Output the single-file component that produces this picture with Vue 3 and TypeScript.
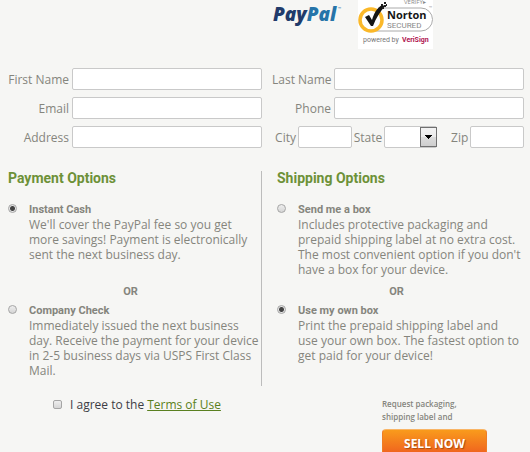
<script setup lang="ts">
import { ref } from 'vue'

interface Option {
  id: string
  title: string
  text: string
}

const first = ref('')
const last = ref('')
const email = ref('')
const phone = ref('')
const address = ref('')
const city = ref('')
const state = ref('')
const zip = ref('')
const agreed = ref(false)
const payment = ref('cash')
const shipping = ref('own')

const states: string[] = ['', 'CA', 'FL', 'NY', 'TX']

const payments: Option[] = [
  { id: 'cash', title: 'Instant Cash', text: "We'll cover the PayPal fee so you get more savings! Payment is electronically sent the next business day." },
  { id: 'check', title: 'Company Check', text: 'Immediately issued the next business day. Receive the payment for your device in 2-5 business days via USPS First Class Mail.' },
]
const shippings: Option[] = [
  { id: 'send', title: 'Send me a box', text: "Includes protective packaging and prepaid shipping label at no extra cost. The most convenient option if you don't have a box for your device." },
  { id: 'own', title: 'Use my own box', text: 'Print the prepaid shipping label and\nuse your own box. The fastest option to get paid for your device!' },
]
</script>

<template>
  <form class="page" @submit.prevent>
    <header class="logos">
      <svg class="paypal" width="70" height="30" viewBox="0 0 70 30" role="img" aria-label="PayPal">
        <text x="0" y="21" class="pp"><tspan class="dark">Pay</tspan><tspan class="light">Pal</tspan></text>
        <text x="65" y="10" class="tm">™</text>
      </svg>
      <svg class="norton" width="75" height="49" viewBox="0 0 75 49" role="img" aria-label="Norton Secured, powered by VeriSign">
        <rect width="75" height="49" fill="#fff" />
        <text x="46" y="4" class="verify">VERIFY▸</text>
        <path d="M20 8H63a11.500 11.500 0 0 1 0 23H14" fill="none" stroke="#aaa" stroke-width="1" />
        <circle cx="13" cy="20" r="11" fill="#fff" stroke="#fbb829" stroke-width="3.500" />
        <path d="M7 17l4-2 3 5C16 13 19 8 24 5l3 1C22 12 18 18 15 26h-2z" fill="#161616" />
        <path d="M23 4h2v2h-2zM26 2h2v2h-2zM28 4h1v2h-1zM26 5h2v2h-2zM24 7h2v2h-2z" fill="#222" />
        <text x="29" y="19" class="nname">Norton</text>
        <text x="29" y="28" class="nsec">SECURED</text>
        <text x="5" y="42" class="npow">powered by</text>
        <text x="44" y="42" class="nver">VeriSign</text>
        <text x="71" y="9" class="tm2">™</text>
      </svg>
    </header>

    <section class="fields">
      <div class="left">
        <label for="first">First Name</label><input id="first" v-model="first" type="text">
        <label for="email">Email</label><input id="email" v-model="email" type="text">
        <label for="address">Address</label><input id="address" v-model="address" type="text">
      </div>
      <div class="right">
        <label for="last">Last Name</label><input id="last" v-model="last" type="text">
        <label for="phone">Phone</label><input id="phone" v-model="phone" type="text">
        <div class="place">
          <label for="city">City</label><input id="city" v-model="city" type="text">
          <label for="state">State</label>
          <span class="drop">
            <select id="state" v-model="state">
              <option v-for="s in states" :key="s" :value="s">{{ s }}</option>
            </select>
            <svg class="arrow" width="17" height="20" viewBox="0 0 17 20" aria-hidden="true">
              <defs>
                <linearGradient id="face" x1="0" y1="0" x2="0" y2="1">
                  <stop offset="0" stop-color="#f3f3f3" />
                  <stop offset="0.500" stop-color="#ebebeb" />
                  <stop offset="0.500" stop-color="#dcdcdc" />
                  <stop offset="1" stop-color="#cdcdcd" />
                </linearGradient>
              </defs>
              <rect x="0.500" y="0.500" width="16" height="19" fill="url(#face)" stroke="#707070" />
              <path d="M5 8h7v1h-1v1h-1v1h-1v1H8v-1H7v-1H6V9H5z" fill="#000" />
            </svg>
          </span>
          <label for="zip">Zip</label><input id="zip" v-model="zip" type="text">
        </div>
      </div>
    </section>

    <section class="options">
      <h2 class="pay">Payment Options</h2>
      <h2 class="ship">Shipping Options</h2>
      <template v-for="(p, i) in payments" :key="p.id">
        <p v-if="i > 0" class="or pay">OR</p>
        <p v-if="i > 0" class="or ship">OR</p>
        <label class="option pay">
          <input v-model="payment" type="radio" name="payment" :value="p.id">
          <span><strong>{{ p.title }}</strong>{{ p.text }}</span>
        </label>
        <label class="option ship">
          <input v-model="shipping" type="radio" name="shipping" :value="shippings[i].id">
          <span><strong>{{ shippings[i].title }}</strong>{{ shippings[i].text }}</span>
        </label>
      </template>
    </section>

    <footer class="finish">
      <div class="terms">
        <input id="agree" v-model="agreed" type="checkbox">
        <label for="agree">I agree to the</label>
        <a href="#terms">Terms of Use</a>
      </div>
      <div class="sell">
        <p>Request packaging, shipping label and</p>
        <button type="submit">SELL NOW</button>
      </div>
    </footer>
  </form>
</template>

<style>
body {
  background: #f6f6f4;
}
</style>

<style scoped>
.page {
  box-sizing: border-box;
  height: 100vh;
  overflow: hidden;
  padding: 0 6px 0 8px;
  background: #f6f6f4;
  color: #85857d;
  font: 12px/15px "Open Sans", "Noto Sans", sans-serif;
}
.logos {
  display: flex;
  justify-content: center;
  gap: 15px;
  padding-left: 186px;
  padding-right: 12px;
  height: 68px;
}
.pp {
  font: italic 800 19px "Open Sans", sans-serif;
}
.dark { fill: #213b6b; }
.light { fill: #2674a9; }
.tm { font: 4px "Open Sans", sans-serif; fill: #2674a9; }
.tm2 { font: 4px "Open Sans", sans-serif; fill: #999; }
.verify { font: 6px "Open Sans", sans-serif; fill: #888; }
.nname { font: bold 11px "Open Sans", sans-serif; fill: #161616; }
.nsec { font: 8px Roboto, sans-serif; fill: #888; }
.npow { font: 7px Roboto, sans-serif; fill: #777; }
.nver { font: bold 7px Roboto, sans-serif; fill: #b01450; }

.fields {
  display: grid;
  grid-template-columns: 254fr 252fr;
  column-gap: 10px;
}
.left,
.right {
  display: grid;
  grid-template-columns: 61px 1fr;
  column-gap: 3px;
  row-gap: 7px;
  align-items: center;
}
.right {
  grid-template-columns: 59px 1fr;
}
.left label,
.right label {
  text-align: right;
  white-space: nowrap;
}
input[type="text"],
select {
  box-sizing: border-box;
  width: 100%;
  min-width: 0;
  height: 22px;
  margin: 0;
  padding: 0 4px;
  border: 1px solid #c9c9c9;
  border-radius: 2px;
  background: #fff;
  color: #555;
  font: inherit;
}
.place {
  grid-column: 1 / -1;
  display: grid;
  grid-template-columns: 24px 1fr 28px 1fr 29px 1fr;
  column-gap: 2px;
  align-items: center;
}
.drop {
  display: grid;
}
.drop > * {
  grid-area: 1 / 1;
}
select {
  appearance: none;
}
.arrow {
  place-self: center end;
  pointer-events: none;
}

.options {
  display: grid;
  grid-template-columns: 254fr 262fr;
  margin-top: 23px;
}
.pay {
  border-right: 1px solid #bcbcbc;
}
.ship {
  padding-left: 15px;
}
h2 {
  margin: 0;
  padding-bottom: 16px;
  color: #6d9138;
  font: bold 14px/15px Roboto, sans-serif;
}
.option {
  display: grid;
  grid-template-columns: 9px 1fr;
  column-gap: 12px;
  align-items: start;
  white-space: pre-line;
}
.option:nth-last-child(-n + 2) {
  padding-bottom: 8px;
}
.option strong {
  display: block;
  font: bold 11px/15px Roboto, sans-serif;
}
.or {
  margin: 0;
  padding-top: 7px;
  padding-bottom: 4px;
  padding-right: 8px;
  font: bold 11px/15px Roboto, sans-serif;
  text-align: center;
}
input[type="radio"],
input[type="checkbox"] {
  appearance: none;
  box-sizing: border-box;
  width: 9px;
  height: 9px;
  margin: 2px 0 0;
  border: 1px solid #a5a5a5;
  border-radius: 50%;
  background: linear-gradient(#eee, #d5d5d5);
}
input[type="radio"]:checked {
  background: radial-gradient(circle, #444 2px, #e6e6e6 3px);
}
input[type="checkbox"] {
  margin: 0;
  border-radius: 2px;
}
input[type="checkbox"]:checked {
  background: #555;
}

.finish {
  display: grid;
  grid-template-columns: 374fr 142fr;
  padding-top: 11px;
}
.terms {
  display: flex;
  align-items: center;
  align-self: start;
  padding-left: 45px;
  color: #3d3d45;
}
.terms label {
  margin-left: 8px;
  margin-right: 3px;
}
.terms a {
  color: #5a8020;
}
.sell p {
  width: 90px;
  margin: 0 0 6px;
  font-size: 8px;
  font-weight: 600;
  line-height: 13px;
}
button {
  width: 105px;
  height: 29px;
  padding: 0;
  border: 1px solid #ef7d24;
  border-top-color: #f9b566;
  border-radius: 4px;
  background: linear-gradient(#f99b1c, #ee5a1f);
  color: #fff;
  font: bold 12px/15px "Open Sans", sans-serif;
  text-shadow: 1px 1px 1px #a84a10;
}
</style>
